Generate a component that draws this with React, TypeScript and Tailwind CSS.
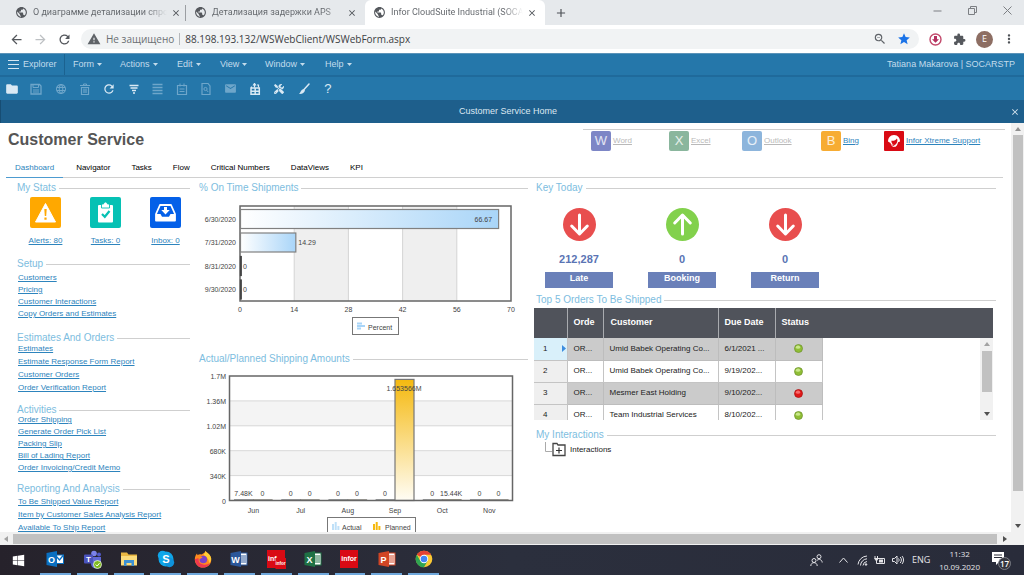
import React from "react";
import {
  MdPublic,
  MdClose,
  MdAdd,
  MdArrowBack,
  MdArrowForward,
  MdRefresh,
  MdWarning,
  MdZoomOut,
  MdStar,
  MdExtension,
  MdMoreVert,
  MdFolder,
  MdLanguage,
  MdEmail,
} from "react-icons/md";
import { FaTools, FaWindows } from "react-icons/fa";

/* ---------- browser chrome ---------- */

function BrowserTab({ title, active = false, divider = false }: { title: string; active?: boolean; divider?: boolean }) {
  return (
    <div
      className={
        active
          ? "flex h-full w-[180px] items-center rounded-t-md bg-white pl-2 pr-2"
          : "flex h-full w-[179px] items-center pl-2 pr-2"
      }
    >
      <MdPublic className="size-[13px] shrink-0 text-[#55585d]" />
      <span className="ml-[5px] min-w-0 flex-1 overflow-hidden whitespace-nowrap bg-gradient-to-r from-[#5f6368] from-85% to-transparent bg-clip-text text-transparent">
        {title}
      </span>
      <button aria-label="Закрыть вкладку" className="ml-1 text-[#4d5156]">
        <MdClose className="size-[10px]" />
      </button>
      {divider && <span className="-mr-2 ml-1 h-4 w-px bg-[#9b9ea2]" />}
    </div>
  );
}

function BrowserChrome() {
  return (
    <header className="shrink-0 font-['Open_Sans','Noto_Sans',sans-serif] text-[9px]">
      <div className="flex h-[25px] items-center bg-[#e6e9ec] pl-[7px] font-[Roboto,'Noto_Sans',sans-serif]">
        <BrowserTab title="О диаграмме детализации спро" divider />
        <BrowserTab title="Детализация задержки APS" />
        <BrowserTab title="Infor CloudSuite Industrial (SOCA" active />
        <button aria-label="Новая вкладка" className="ml-[9px] text-[#4d5156]">
          <MdAdd className="size-[14px]" />
        </button>
        <div className="ml-auto flex h-full items-center gap-[26px] pr-3 pb-1 text-[#7c7f83]">
          <button aria-label="Свернуть">
            <svg className="size-[9px]" viewBox="0 0 9 9" stroke="currentColor"><path d="M0.5 5H8.5" /></svg>
          </button>
          <button aria-label="Восстановить">
            <svg className="size-[9px]" viewBox="0 0 9 9" fill="none" stroke="currentColor">
              <path d="M0.5 2.5H6.5V8.5H0.5ZM2.5 2.5V0.5H8.5V6.5H6.5" />
            </svg>
          </button>
          <button aria-label="Закрыть">
            <svg className="size-[9px]" viewBox="0 0 9 9" stroke="currentColor"><path d="M0.5 0.5L8.5 8.5M8.5 0.5L0.5 8.5" /></svg>
          </button>
        </div>
      </div>
      <div className="flex h-7 items-center bg-white pl-[9px] pr-2">
        <button aria-label="Назад" className="text-[#55585d]"><MdArrowBack className="size-[15px]" /></button>
        <button aria-label="Вперёд" className="ml-[9px] text-[#bdc0c3]"><MdArrowForward className="size-[15px]" /></button>
        <button aria-label="Обновить" className="ml-[9px] text-[#55585d]"><MdRefresh className="size-[15px]" /></button>
        <div className="ml-[9px] flex h-5 flex-1 items-center rounded-full bg-[#f1f3f4] pl-[6px] pr-2">
          <MdWarning className="size-[14px] text-[#5f6368]" />
          <span className="ml-[5px] text-[10px] text-[#6b6f73]">Не защищено</span>
          <span className="mx-[5px] h-3 w-px bg-[#b4b7ba]" />
          <input
            aria-label="Адрес"
            defaultValue="88.198.193.132/WSWebClient/WSWebForm.aspx"
            className="min-w-0 flex-1 bg-transparent text-[10px] text-[#3c4043] outline-none"
          />
          <MdZoomOut className="size-[14px] text-[#5f6368]" />
          <MdStar className="ml-[10px] size-[14px] text-[#1a73e8]" />
        </div>
        <svg className="ml-[10px] size-[13px]" viewBox="0 0 13 13">
          <circle cx="6.5" cy="6.5" r="5.5" fill="#fff" stroke="#c2496b" strokeWidth="1.4" />
          <path d="M5 3h3v3.2h2L6.5 9.8 3 6.2h2z" fill="#b3305f" />
        </svg>
        <MdExtension className="ml-[11px] size-[13px] text-[#55585d]" />
        <span className="ml-[10px] flex size-[17px] items-center justify-center rounded-full bg-[#8d6e63] text-[9px] text-white">E</span>
        <MdMoreVert className="ml-[9px] size-[14px] text-[#4d5156]" />
      </div>
    </header>
  );
}

/* ---------- application bars ---------- */

const menus = [
  { label: "Form", width: "w-[47px]" },
  { label: "Actions", width: "w-[57px]" },
  { label: "Edit", width: "w-[43px]" },
  { label: "View", width: "w-[45px]" },
  { label: "Window", width: "w-[60px]" },
  { label: "Help", width: "w-[40px]" },
];

function SaveGlyph() {
  return (
    <svg className="size-3" viewBox="0 0 12 12" fill="none" stroke="currentColor">
      <path d="M1 1.5h8.5L11 3v8H1z" strokeWidth="1.3" />
      <path d="M3 1.5v3h5.5v-3M3 7h6M3 9h6" />
    </svg>
  );
}

function TrashGlyph() {
  return (
    <svg className="size-3" viewBox="0 0 12 12" fill="none" stroke="currentColor">
      <path d="M1 2.5h10M4.5 2.3V1h3v1.3" />
      <path d="M2.500 4.500v7h7v-7zM5 5.500v4.500M7 5.500v4.500" strokeWidth="1.2" />
    </svg>
  );
}

function FilterGlyph() {
  return (
    <svg className="size-3" viewBox="0 0 12 12" fill="none" stroke="currentColor" strokeWidth="1.4">
      <path d="M1.500 2.500h9M2.500 5h7M4 7.500h4M5 10h2" />
    </svg>
  );
}

function RowsGlyph() {
  return (
    <svg className="h-3 w-[11px]" viewBox="0 0 11 12" fill="none" stroke="currentColor" strokeWidth="1.6">
      <path d="M0.500 1.500h10M0.500 4.500h10M0.500 7.500h10M0.500 10.500h10" />
    </svg>
  );
}

function NoteGlyph() {
  return (
    <svg className="size-3" viewBox="0 0 12 12" fill="none" stroke="currentColor">
      <path d="M1.500 2.500h9v9h-9z" strokeWidth="1.2" />
      <path d="M4 0.500v3M8 0.500v3M3.500 6h5M3.500 8.500h5" />
    </svg>
  );
}

function SearchDocGlyph() {
  return (
    <svg className="size-3" viewBox="0 0 12 12" fill="none" stroke="currentColor">
      <path d="M2 0.500h6L10 3v8.500H2z" strokeWidth="1.200" />
      <circle cx="5.500" cy="6" r="1.600" />
      <path d="M6.700 7.200L8.200 9" />
    </svg>
  );
}

function ExportGlyph() {
  return (
    <svg className="size-3" viewBox="0 0 12 12" fill="none" stroke="currentColor">
      <path d="M2.500 5V3.500M5.500 0.500v4M4 2.500l1.500-2 1.500 2M8 2h1.500v2.500" strokeWidth="1.200" />
      <path d="M2 5h8.300v6.300H2zM2 8.200h8.300M6.200 5v6" strokeWidth="1.500" />
    </svg>
  );
}

function BrushGlyph() {
  return (
    <svg className="size-3" viewBox="0 0 12 12" fill="none" stroke="currentColor">
      <path d="M11 1L6 6.500" strokeWidth="1.500" strokeLinecap="round" />
      <path d="M5.500 6l1.500 1.500C6.500 9.500 4 11.500 1 11 2.500 10 2.500 7 5.500 6z" fill="currentColor" stroke="none" />
    </svg>
  );
}

const tools = [
  { label: "Open", icon: <MdFolder className="size-[14px]" />, on: true },
  { label: "Save", icon: <SaveGlyph />, on: false },
  { label: "Globe", icon: <MdLanguage className="size-3" />, on: false },
  { label: "Delete", icon: <TrashGlyph />, on: false },
  { label: "Refresh", icon: <MdRefresh className="size-[14px]" />, on: true },
  { label: "Filter", icon: <FilterGlyph />, on: true },
  { label: "Rows", icon: <RowsGlyph />, on: false },
  { label: "Notes", icon: <NoteGlyph />, on: false },
  { label: "Find document", icon: <SearchDocGlyph />, on: false },
  { label: "Mail", icon: <MdEmail className="size-[13px]" />, on: false },
  { label: "Export", icon: <ExportGlyph />, on: true },
  { label: "Design", icon: <FaTools className="size-[10px]" />, on: true },
  { label: "Theme", icon: <BrushGlyph />, on: true },
  { label: "Help", icon: <span className="text-[13px] leading-none">?</span>, on: true },
];

function AppBars() {
  return (
    <div className="shrink-0 text-[9px] text-[#c3dcec]">
      <nav className="flex h-6 items-center border-t border-b-2 border-t-[#5b93b8] border-b-[#1f6a9b] bg-[#2577aa]">
        <button className="flex h-full w-[65px] items-center gap-[4px] border-r border-[#1b6290] pl-[8px]">
          <svg className="h-[9px] w-[11px]" viewBox="0 0 11 9" stroke="#d5e6f1"><path d="M0 0.500H11M0 4.500H11M0 8.500H11" /></svg>
          Explorer
        </button>
        <div className="flex pl-2">
          {menus.map((m) => (
            <button key={m.label} className={"flex items-center gap-[3px] " + m.width}>
              {m.label}
              <svg className="h-[3px] w-[5px]" viewBox="0 0 5 3" fill="currentColor"><path d="M0 0h5L2.500 3z" /></svg>
            </button>
          ))}
        </div>
        <span className="ml-auto pr-[9px]">Tatiana Makarova | SOCARSTP</span>
      </nav>
      <div className="flex h-[23px] items-center bg-[#2577aa]">
        <div className="grid w-[340px] grid-cols-14">
          {tools.map((t) => (
            <button
              key={t.label}
              aria-label={t.label}
              className={
                t.on
                  ? "flex items-center justify-center text-[#d9e9f4]"
                  : "flex items-center justify-center text-[#6ea6ca]"
              }
            >
              {t.icon}
            </button>
          ))}
        </div>
      </div>
      <div className="flex h-[23px] items-center border-l border-[#174d73] bg-[#1e5f8c] text-[#dce8f1]">
        <span className="flex-1 pl-[5px] text-center">Customer Service Home</span>
        <button aria-label="Close form" className="pr-1"><MdClose className="size-[10px]" /></button>
      </div>
    </div>
  );
}

/* ---------- shared pieces ---------- */

function SectionTitle({ children }: { children: React.ReactNode }) {
  return (
    <h2 className="flex h-2 items-center gap-[3px] whitespace-nowrap text-[10px] leading-[8px] text-[#7dbde0]">
      {children}
      <span className="h-px flex-1 bg-[#cfcfcf]" />
    </h2>
  );
}

function Link({ children }: { children: React.ReactNode }) {
  return <a href="#" className="whitespace-nowrap text-[#2d84bd] underline">{children}</a>;
}

function LinkList({ items, tall = false }: { items: string[]; tall?: boolean }) {
  return (
    <ul className={tall ? "pl-px leading-[13px]" : "pl-px leading-[12px]"}>
      {items.map((i) => (
        <li key={i}><Link>{i}</Link></li>
      ))}
    </ul>
  );
}

/* ---------- left column ---------- */

const stats = [
  {
    label: "Alerts: 80",
    tile: "flex size-[31px] items-center justify-center rounded-xs bg-[#ffa800]",
    icon: (
      <svg className="size-[23px]" viewBox="0 0 23 23">
        <path d="M11.500 2.500L21.500 21H1.500z" fill="#fff" stroke="#fff" strokeLinejoin="round" />
        <path d="M10.300 8h2.400l-.5 7h-1.400zM10.400 16.500h2.200v2.200h-2.200z" fill="#ffa800" />
      </svg>
    ),
  },
  {
    label: "Tasks: 0",
    tile: "flex size-[31px] items-center justify-center rounded-xs bg-[#06c1b4]",
    icon: (
      <svg className="size-[23px]" viewBox="0 0 23 23">
        <path d="M5 4h13a1 1 0 0 1 1 1v15.500a1 1 0 0 1-1 1H5a1 1 0 0 1-1-1V5a1 1 0 0 1 1-1z" fill="#fff" />
        <path d="M7.500 3h2a2 2 0 0 1 4 0h2v4h-8z" fill="#fff" stroke="#06c1b4" strokeWidth="0.900" />
        <path d="M8 13l2.800 2.800L15.500 10" fill="none" stroke="#06c1b4" strokeWidth="2.200" />
      </svg>
    ),
  },
  {
    label: "Inbox: 0",
    tile: "flex size-[31px] items-center justify-center rounded-xs bg-[#0460e8]",
    icon: (
      <svg className="size-[23px]" viewBox="0 0 23 23">
        <path d="M6 4h11l4 9v6.500H2V13z" fill="none" stroke="#fff" strokeWidth="1.800" strokeLinejoin="round" />
        <path d="M2 13h4.500l1.500 2.700h7l1.500-2.700H21v6.500H2z" fill="#fff" />
        <path d="M10 6h3v3h2.700l-4.200 4.500L7.300 9H10z" fill="#fff" />
      </svg>
    ),
  },
];

function LeftColumn() {
  return (
    <section className="min-w-0">
      <SectionTitle>My Stats</SectionTitle>
      <div className="mt-[5px] flex gap-[9px] pl-[3px]">
        {stats.map((s) => (
          <div key={s.label} className="flex w-[51px] shrink-0 flex-col items-center gap-2 leading-[10px]">
            <span className={s.tile}>{s.icon}</span>
            <Link>{s.label}</Link>
          </div>
        ))}
      </div>
      <div className="mt-[14px] flex flex-col gap-1">
        <SectionTitle>Setup</SectionTitle>
        <LinkList items={["Customers", "Pricing", "Customer Interactions", "Copy Orders and Estimates"]} />
      </div>
      <div className="mt-[14px]">
        <SectionTitle>Estimates And Orders</SectionTitle>
        <LinkList tall items={["Estimates", "Estimate Response Form Report", "Customer Orders", "Order Verification Report"]} />
      </div>
      <div className="mt-3">
        <SectionTitle>Activities</SectionTitle>
        <LinkList items={["Order Shipping", "Generate Order Pick List", "Packing Slip", "Bill of Lading Report", "Order Invoicing/Credit Memo"]} />
      </div>
      <div className="mt-[11px] flex flex-col gap-[2px]">
        <SectionTitle>Reporting And Analysis</SectionTitle>
        <LinkList tall items={["To Be Shipped Value Report", "Item by Customer Sales Analysis Report", "Available To Ship Report"]} />
      </div>
    </section>
  );
}

/* ---------- charts ---------- */

const shipments = [
  { date: "6/30/2020", value: 66.67 },
  { date: "7/31/2020", value: 14.29 },
  { date: "8/31/2020", value: 0 },
  { date: "9/30/2020", value: 0 },
];

function ShipmentsChart() {
  const x0 = 42;
  const w = 271;
  const step = w / 5;
  return (
    <svg className="block w-full text-[7px]" viewBox="0 0 330 149" fill="#444" role="img" aria-label="% On Time Shipments">
      <defs>
        <linearGradient id="blueBar"><stop offset="0" stopColor="#fff" /><stop offset="1" stopColor="#a9d5f8" /></linearGradient>
      </defs>
      <rect x={x0} y="10" width={w} height="95" fill="#fff" />
      {[1, 3].map((i) => (
        <rect key={i} x={x0 + i * step} y="10" width={step} height="95" fill="#efefef" />
      ))}
      {[1, 2, 3, 4].map((i) => (
        <path key={i} d={`M${x0 + i * step} 10V105`} stroke="#d4d4d4" />
      ))}
      <rect x={x0} y="10" width={w} height="95" fill="none" stroke="#666" strokeWidth="1.500" />
      {shipments.map((s, i) => {
        const y = 13.5 + i * 23.5;
        const bar = (s.value / 70) * w;
        return (
          <g key={s.date}>
            <rect x={x0 + 0.5} y={y} width={Math.max(bar, 0.8)} height="19" fill="url(#blueBar)" stroke={s.value ? "#808080" : "#444"} strokeWidth="1.200" />
            <text x="38" y={y + 12} textAnchor="end">{s.date}</text>
            {s.value > 50 ? (
              <text x={x0 + bar - 6} y={y + 12} textAnchor="end">{s.value}</text>
            ) : (
              <text x={x0 + bar + 3} y={y + 12}>{s.value}</text>
            )}
          </g>
        );
      })}
      {[0, 14, 28, 42, 56, 70].map((t, i) => (
        <text key={t} x={x0 + i * step} y="116" textAnchor="middle">{t}</text>
      ))}
      <rect x="154.500" y="121.500" width="46" height="17" fill="#fff" stroke="#777" />
      <path d="M159 127.500h5M159 130h8M159 132.500h4" stroke="#a9d5f8" strokeWidth="1.800" />
      <text x="170" y="134">Percent</text>
    </svg>
  );
}

const months = [
  { name: "Jun", actual: 7480, planned: 0, a: "7.48K", p: "0" },
  { name: "Jul", actual: 0, planned: 0, a: "0", p: "0" },
  { name: "Aug", actual: 0, planned: 0, a: "0", p: "0" },
  { name: "Sep", actual: 0, planned: 1653566, a: "0", p: "1.653566M" },
  { name: "Oct", actual: 0, planned: 15440, a: "0", p: "15.44K" },
  { name: "Nov", actual: 0, planned: 0, a: "0", p: "0" },
];

function AmountsChart() {
  const x0 = 31.5;
  const w = 283;
  const y0 = 9;
  const h = 124.5;
  const base = y0 + h;
  const group = w / 6;
  const scale = (v: number) => Math.max((v / 1700000) * h, 0.8);
  return (
    <svg className="block w-full text-[7px]" viewBox="0 0 330 175" fill="#444" role="img" aria-label="Actual/Planned Shipping Amounts">
      <defs>
        <linearGradient id="goldBar" x1="0" y1="0" x2="0" y2="1"><stop offset="0" stopColor="#f5b90f" /><stop offset="1" stopColor="#fffdf5" /></linearGradient>
      </defs>
      <rect x={x0} y={y0} width={w} height={h} fill="#fff" />
      {[1, 3].map((i) => (
        <rect key={i} x={x0} y={y0 + (i * h) / 5} width={w} height={h / 5} fill="#f4f4f4" />
      ))}
      {[1, 2, 3, 4].map((i) => (
        <path key={i} d={`M${x0} ${y0 + (i * h) / 5}H${x0 + w}`} stroke="#d8d8d8" />
      ))}
      {months.map((m, i) => {
        const gx = x0 + i * group + 5;
        const big = m.planned > 1000000;
        return (
          <g key={m.name}>
            <rect x={gx} y={base - scale(m.actual)} width="19" height={scale(m.actual)} fill="#bfe0f8" stroke="#777" strokeWidth="0.800" />
            <rect x={gx + 19} y={base - scale(m.planned)} width="19" height={scale(m.planned)} fill={big ? "url(#goldBar)" : "#a89a6c"} stroke="#777" strokeWidth={big ? 1.2 : 0.6} />
            <text x={gx + 9} y={base - 5} textAnchor="middle">{m.a}</text>
            <text x={gx + 28} y={big ? y0 + 15 : base - 5} textAnchor="middle">{m.p}</text>
            <text x={gx + 19} y={base + 12} textAnchor="middle">{m.name}</text>
          </g>
        );
      })}
      <rect x={x0} y={y0} width={w} height={h} fill="none" stroke="#666" strokeWidth="1.500" />
      {["1.7M", "1.36M", "1.02M", "680K", "340K", "0"].map((t, i) => (
        <text key={t} x="28" y={y0 + (i * h) / 5 + 3} textAnchor="end">{t}</text>
      ))}
      <rect x="129.500" y="150.500" width="88" height="20" fill="#fff" stroke="#777" />
      <path d="M135 163v-6M137.700 163v-8M140.400 163v-4" stroke="#bfe0f8" strokeWidth="2" />
      <text x="144" y="163">Actual</text>
      <path d="M176 163v-6M178.700 163v-8M181.400 163v-4" stroke="#f5b90f" strokeWidth="2" />
      <text x="187" y="163">Planned</text>
    </svg>
  );
}

/* ---------- right column ---------- */

function ArrowBadge({ up = false }: { up?: boolean }) {
  return (
    <svg className="size-[33px]" viewBox="0 0 33 33" fill="none">
      <circle cx="16.500" cy="16.500" r="16.500" fill={up ? "#82d14c" : "#e84e4e"} />
      <path
        d={up ? "M16.500 26V8M8.700 15l7.800-8 7.800 8" : "M16.500 7V25M8.700 18l7.800 8 7.800-8"}
        stroke="#fff"
        strokeWidth="3"
        strokeLinecap="round"
        strokeLinejoin="round"
      />
    </svg>
  );
}

const keys = [
  { label: "Late", value: "212,287", up: false },
  { label: "Booking", value: "0", up: true },
  { label: "Return", value: "0", up: false },
];

const orders = [
  { customer: "Umid Babek Operating Co...", due: "6/1/2021 ...", ok: true },
  { customer: "Umid Babek Operating Co...", due: "9/19/202...", ok: true },
  { customer: "Mesmer East Holding", due: "9/10/202...", ok: false },
  { customer: "Team Industrial Services", due: "8/10/202...", ok: true },
];

function OrdersTable() {
  return (
    <div className="relative -ml-0.5 mr-[3px] mt-1 h-28 overflow-hidden">
      <table className="w-full table-fixed border-collapse text-left">
        <colgroup>
          <col className="w-[33px]" />
          <col className="w-9" />
          <col className="w-[115px]" />
          <col className="w-[57px]" />
          <col className="w-[47px]" />
          <col />
        </colgroup>
        <thead>
          <tr className="h-[30px] bg-[#50535b] text-[9px] text-white">
            <th className="border-r border-[#a9abaf]" />
            <th className="border-r border-[#a9abaf] pl-[6px]">Orde</th>
            <th className="border-r border-[#a9abaf] pl-[7px]">Customer</th>
            <th className="border-r border-[#a9abaf] pl-[6px]">Due Date</th>
            <th className="pl-[6px]">Status</th>
            <th />
          </tr>
        </thead>
        <tbody className="whitespace-nowrap text-[#222]">
          {orders.map((o, i) => (
            <tr key={i} className="h-[22px]">
              <td className={i === 0 ? "border-b border-r border-[#c4c4c4] bg-[#d9f0fa]" : "border-b border-r border-[#c4c4c4] bg-[#efefef]"}>
                <span className="flex items-center justify-between pl-[9px] pr-[1px]">
                  {i + 1}
                  {i === 0 && <svg className="h-[7px] w-1" viewBox="0 0 4 7" fill="#3b8de0"><path d="M0 0l4 3.500L0 7z" /></svg>}
                </span>
              </td>
              {["OR...", o.customer, o.due].map((t, j) => (
                <td key={j} className={i % 2 ? "border-b border-r border-[#c4c4c4] bg-white pl-[6px]" : "border-b border-r border-[#bdbdbd] bg-[#cbcbcb] pl-[6px]"}>
                  {t}
                </td>
              ))}
              <td className={i % 2 ? "border-b border-r border-[#c4c4c4] bg-white" : "border-b border-r border-[#bdbdbd] bg-[#cbcbcb]"}>
                <svg className="mx-auto size-[9px]" viewBox="0 0 9 9" role="img" aria-label={o.ok ? "OK" : "Late"}>
                  <circle cx="4.500" cy="4.500" r="4" fill={o.ok ? "#8fbe35" : "#e01818"} stroke={o.ok ? "#6b8f2b" : "#a81010"} strokeWidth="0.700" />
                  <ellipse cx="4" cy="3.200" rx="2.200" ry="1.600" fill={o.ok ? "#c9e88a" : "#f86a6a"} />
                </svg>
              </td>
              <td />
            </tr>
          ))}
        </tbody>
      </table>
      <div className="absolute bottom-0 right-0 top-[30px] flex w-[13px] flex-col items-center bg-[#f1f1f1] py-1">
        <svg className="h-1 w-[6px]" viewBox="0 0 6 4" fill="#a3a3a3"><path d="M0 4h6L3 0z" /></svg>
        <span className="mt-[5px] h-[41px] w-[10px] bg-[#c1c1c1]" />
        <svg className="mt-auto h-1 w-[6px]" viewBox="0 0 6 4" fill="#505050"><path d="M0 0h6L3 4z" /></svg>
      </div>
    </div>
  );
}

function RightColumn() {
  return (
    <section className="min-w-0">
      <SectionTitle>Key Today</SectionTitle>
      <div className="mt-4 flex gap-[35px] pl-[9px]">
        {keys.map((k) => (
          <div key={k.label} className="flex w-[68px] flex-col items-center font-bold">
            <ArrowBadge up={k.up} />
            <span className="mt-[11px] text-[11px] leading-[14px] text-[#5a74b4]">{k.value}</span>
            <button className="mt-[6px] h-4 w-full bg-[#6a80b9] pb-1 text-[9px] leading-[12px] text-white">{k.label}</button>
          </div>
        ))}
      </div>
      <div className="mt-2">
        <SectionTitle>Top 5 Orders To Be Shipped</SectionTitle>
        <OrdersTable />
      </div>
      <div className="mt-[11px]">
        <SectionTitle>My Interactions</SectionTitle>
        <div className="mt-[3px] flex items-center pl-[9px] text-[#222]">
          <svg className="h-[15px] w-[22px]" viewBox="0 0 22 15" fill="none">
            <path d="M0.500 0V9.500H7" stroke="#aaa" />
            <path d="M8 13.500V1.500h4l1 1.500h7v10.500z" stroke="#444" strokeWidth="1.300" />
            <path d="M11 8.500h6M14 5.500v6" stroke="#333" strokeWidth="1.200" />
          </svg>
          <span className="ml-[3px]">Interactions</span>
        </div>
      </div>
    </section>
  );
}

/* ---------- page header ---------- */

const apps = [
  { label: "Word", letter: "W", tile: "bg-[#7d86c6]", enabled: false },
  { label: "Excel", letter: "X", tile: "bg-[#8ab69d]", enabled: false },
  { label: "Outlook", letter: "O", tile: "bg-[#8db5dc]", enabled: false },
  { label: "Bing", letter: "B", tile: "bg-[#f7ac33]", enabled: true },
];

function PageHeader() {
  return (
    <div className="flex h-[34px] items-start justify-between pl-2 pr-[6px] pt-[6px]">
      <h1 className="mt-px text-[16px] font-bold leading-[20px] text-[#555]">Customer Service</h1>
      <div className="grid w-[422px] grid-cols-[78fr_73fr_79fr_63fr_121fr] border-t border-[#cfcfcf] pl-2 pt-px">
        {apps.map((a) => (
          <a
            key={a.label}
            href="#"
            className={a.enabled ? "flex items-center gap-[2px] text-[#2d84bd]" : "flex items-center gap-[2px] text-[#b9b9b9]"}
          >
            <span className={"inline-flex size-5 items-center justify-center rounded-xs text-[13px] text-white/80 " + a.tile}>{a.letter}</span>
            <span className="underline">{a.label}</span>
          </a>
        ))}
        <a href="#" className="flex items-center gap-[2px] whitespace-nowrap text-[#2d84bd]">
          <svg className="size-5 shrink-0" viewBox="0 0 20 20">
            <rect width="20" height="20" rx="1" fill="#d90a14" />
            <path d="M10 4c4 0 6 3 6 6.500l-2 .8C13.500 14.500 12 16 10.300 16S7 14.500 6.500 12L4 10.500C4 7 6 4 10 4z" fill="#fff" />
            <path d="M7.300 9.800c2.700.3 4.500-.6 5.600-2.300.6 1 .6 2 .3 3.300-.5 2-1.600 3.200-2.900 3.200-1.500 0-2.800-1.700-3-4.200z" fill="#d90a14" />
            <path d="M7.500 13.700l3 1.200" stroke="#d90a14" strokeWidth="0.800" />
          </svg>
          <span className="underline">Infor Xtreme Support</span>
        </a>
      </div>
    </div>
  );
}

const pageTabs = ["Dashboard", "Navigator", "Tasks", "Flow", "Critical Numbers", "DataViews", "KPI"];

function PageTabs() {
  return (
    <div role="tablist" className="ml-[6px] mr-2 flex h-[21px] items-center gap-[21px] border-b border-[#d0d0d0]">
      {pageTabs.map((t, i) => (
        <button
          key={t}
          role="tab"
          aria-selected={i === 0}
          className={
            i === 0
              ? "-mr-2 h-[21px] border-b border-[#4d9bd0] px-[9px] pt-[3px] text-[#2d84bd]"
              : "h-[21px] pt-[2px] text-black"
          }
        >
          {t}
        </button>
      ))}
    </div>
  );
}

/* ---------- taskbar ---------- */

function OfficeIcon({ letter, front, back }: { letter: string; front: string; back: string }) {
  return (
    <svg className="size-[18px]" viewBox="0 0 18 18">
      <rect x="8" y="3" width="9" height="12" fill="#fff" stroke={back} />
      <path d="M11 6h5M11 8h5M11 10h5M11 12h5" stroke={back} />
      <path d="M0.500 3L11 1v16L0.500 15z" fill={front} />
      <text x="5.600" y="12.500" textAnchor="middle" fontSize="9" fontWeight="700" fill="#fff">{letter}</text>
    </svg>
  );
}

function InforIcon({ twin = false }: { twin?: boolean }) {
  return (
    <svg className="size-[19px]" viewBox="0 0 19 19">
      <rect width="18" height="18" fill="#d90a14" />
      <text x={twin ? 1 : 9} y="11" textAnchor={twin ? "start" : "middle"} fontSize="7" fontWeight="700" fill="#fff">{twin ? "inf" : "infor"}</text>
      {twin && (
        <g>
          <rect x="8.500" y="8" width="10.500" height="11" fill="#d90a14" />
          <text x="13.500" y="15" textAnchor="middle" fontSize="4.500" fontWeight="700" fill="#fff">infor</text>
        </g>
      )}
    </svg>
  );
}

const taskApps = [
  {
    name: "Outlook",
    icon: (
      <svg className="size-[18px]" viewBox="0 0 18 18">
        <rect x="9" y="5" width="8.500" height="8.500" fill="#fff" stroke="#0a6fc0" />
        <path d="M10 6l3.500 4L17.500 5" fill="none" stroke="#0a6fc0" strokeWidth="1.300" />
        <path d="M0.500 3L11 1v16L0.500 15z" fill="#0a6fc0" />
        <text x="5.600" y="12.500" textAnchor="middle" fontSize="9" fontWeight="700" fill="#fff">O</text>
      </svg>
    ),
  },
  {
    name: "Teams",
    icon: (
      <svg className="size-[19px]" viewBox="0 0 19 19">
        <circle cx="11" cy="3.500" r="2.800" fill="#7b83eb" />
        <circle cx="16" cy="4.500" r="2" fill="#5059c9" />
        <path d="M8 7h10v6a4 4 0 0 1-10 1z" fill="#5f68d4" />
        <rect x="1" y="4.500" width="9" height="9" rx="1" fill="#4b53bc" />
        <text x="5.500" y="12" textAnchor="middle" fontSize="8" fontWeight="700" fill="#fff">T</text>
        <circle cx="14.500" cy="14.500" r="4" fill="#7fba1f" stroke="#fff" strokeWidth="0.700" />
        <path d="M12.700 14.500l1.500 1.500 2.300-2.800" fill="none" stroke="#fff" />
      </svg>
    ),
  },
  {
    name: "Explorer",
    icon: (
      <svg className="size-[18px]" viewBox="0 0 18 18">
        <path d="M1 2.500h6l1.500 2H17V15H1z" fill="#e9b743" />
        <path d="M1 6h16v9.500H1z" fill="#fbdc7d" />
        <path d="M4 16V10h10v6h-2.500v-3h-5v3z" fill="#3d91d4" />
      </svg>
    ),
  },
  {
    name: "Skype",
    icon: (
      <svg className="size-[18px]" viewBox="0 0 18 18">
        <circle cx="9" cy="9" r="7.500" fill="#0fa6ea" />
        <circle cx="5.500" cy="5.500" r="4.700" fill="#0fa6ea" />
        <circle cx="12.500" cy="12.500" r="4.700" fill="#0f93dc" />
        <text x="9" y="13" textAnchor="middle" fontSize="11" fontWeight="700" fill="#fff">S</text>
      </svg>
    ),
  },
  {
    name: "Firefox",
    icon: (
      <svg className="size-[18px]" viewBox="0 0 18 18">
        <path d="M11.500 0.800c.8 2 4.500 3 5.600 7.200 1 5.500-3 9.500-8 9.500S.8 13.800.8 9.200C.8 6.800 2 4.500 3 3.500l.6 1.700C4.500 4.300 6 4 7.500 4.500 9 3.500 11.300 3 11.500.8z" fill="#ff8a1f" />
        <path d="M11.500 0.800c.8 2 4.500 3 5.600 7.200.2 2-.6 4-2 5C15 9 12.500 7 9.500 4.500c1-.9 1.900-1.800 2-3.700z" fill="#ffce36" />
        <path d="M.8 9.200C1.500 14 4 17.500 9 17.500c3.500 0 6-2 7.200-4.500-2 1.500-5 2-7 1.500-4-.8-5-3.500-4.500-6.500z" fill="#f0384f" />
        <circle cx="9.300" cy="9.500" r="3.800" fill="#7a42c9" />
        <path d="M4 6c2 0 3 .8 4.500 1-.3 1.300-2 1.500-3 2.500C4.500 8.800 4 7.500 4 6z" fill="#ff8a1f" />
      </svg>
    ),
  },
  { name: "Word", icon: <OfficeIcon letter="W" front="#2b579a" back="#2b579a" /> },
  { name: "Infor client", icon: <InforIcon twin /> },
  { name: "Excel", icon: <OfficeIcon letter="X" front="#1f7145" back="#1f7145" /> },
  { name: "Infor", icon: <InforIcon /> },
  { name: "PowerPoint", icon: <OfficeIcon letter="P" front="#d04525" back="#d04525" /> },
  {
    name: "Chrome",
    icon: (
      <svg className="size-[18px]" viewBox="0 0 18 18">
        <circle cx="9" cy="9" r="8.300" fill="#fbc934" />
        <path d="M9 9L1.800 4.850A8.300 8.300 0 0 1 16.200 4.850H9z" fill="#e34133" />
        <path d="M1.800 4.850A8.300 8.300 0 0 0 9 17.300L12.600 11.100 5.400 11.100z" fill="#30a552" />
        <circle cx="9" cy="9" r="4.200" fill="#fff" />
        <circle cx="9" cy="9" r="3.300" fill="#4285f4" />
      </svg>
    ),
  },
];

function Taskbar() {
  return (
    <footer className="flex h-[30px] shrink-0 items-center bg-gradient-to-r from-[#26222b] via-[#2b2f3d] to-[#292c3a] font-['Open_Sans','Noto_Sans',sans-serif] text-white">
      <button aria-label="Start" className="flex w-[37px] justify-center"><FaWindows className="size-[13px]" /></button>
      <div className="grid h-full w-[405px] grid-cols-11">
        {taskApps.map((a) => (
          <button key={a.name} aria-label={a.name} className="mx-[3px] flex items-center justify-center border-b-2 border-[#6fa8dc] font-['Liberation_Sans',sans-serif]">
            {a.icon}
          </button>
        ))}
      </div>
      <div className="ml-auto flex items-center pr-[13px] text-[#e4e4e8]">
        <svg className="size-[13px]" viewBox="0 0 13 13" fill="none" stroke="currentColor">
          <circle cx="4" cy="6.500" r="2" /><path d="M0.800 12c0-4.500 6.400-4.500 6.400 0" />
          <circle cx="9" cy="2.700" r="2" /><path d="M7 6.500c2-2 5-1 5.200 2" />
        </svg>
        <svg className="ml-4 h-[6px] w-[9px]" viewBox="0 0 9 6" fill="none" stroke="currentColor"><path d="M0.500 5.500l4-4.500 4 4.500" /></svg>
        <svg className="ml-[9px] size-[11px]" viewBox="0 0 11 11" fill="none" stroke="currentColor">
          <path d="M1 9.500A9.500 9.500 0 0 1 10 1M3.500 10.500A7 7 0 0 1 10 3.800M6 10.500A4.500 4.500 0 0 1 10 6.500" />
          <circle cx="9" cy="9.500" r="0.800" fill="currentColor" />
        </svg>
        <svg className="ml-[6px] h-[9px] w-3" viewBox="0 0 12 9" fill="none" stroke="currentColor">
          <path d="M4 2.500h6.500v5H2.500V5" /><path d="M5 5h4" strokeWidth="3" /><path d="M1 0v2M3.500 0v2M0.500 2.500h3.500L2.500 5z" fill="currentColor" />
        </svg>
        <svg className="ml-[6px] h-[10px] w-3" viewBox="0 0 12 10" fill="none" stroke="currentColor">
          <path d="M0.500 3.500h2L5 1v8L2.500 6.500h-2zM6.500 3.500c.8 1 .8 2 0 3M8.200 2c1.600 2 1.600 4 0 6M10 1c2 2.500 2 5.500 0 8" />
        </svg>
        <span className="ml-2 text-[9px]">ENG</span>
        <div className="ml-[9px] text-center text-[8px] leading-[13px]">
          <div>11:32</div>
          <div>10.09.2020</div>
        </div>
        <svg className="ml-3 h-[19px] w-[19px] font-['Open_Sans',sans-serif]" viewBox="0 0 19 19">
          <path d="M0 1h12v10H7l-3 3v-3H0z" fill="#fff" />
          <path d="M2 4h8M2 6.500h8" stroke="#2a2c38" />
          <circle cx="12.500" cy="12.500" r="6" fill="#34363f" stroke="#8b8d96" strokeWidth="0.800" />
          <text x="12.500" y="15.500" textAnchor="middle" fontSize="8" fontWeight="600" fill="#fff">17</text>
        </svg>
      </div>
    </footer>
  );
}

/* ---------- page ---------- */

export default function App() {
  return (
    <div className="flex h-screen flex-col overflow-hidden bg-white font-['Liberation_Sans',Arial,sans-serif] text-[8px]">
      <BrowserChrome />
      <AppBars />
      <div className="flex min-h-0 flex-1">
        <main className="min-w-0 flex-1 overflow-hidden">
          <PageHeader />
          <PageTabs />
          <div className="grid grid-cols-[173fr_330fr_460fr] gap-2 pl-[17px] pr-[15px] pt-[6px]">
            <LeftColumn />
            <section className="min-w-0">
              <div className="pl-px"><SectionTitle>% On Time Shipments</SectionTitle></div>
              <div className="pb-[10px] pt-1"><ShipmentsChart /></div>
              <div className="pl-px"><SectionTitle>Actual/Planned Shipping Amounts</SectionTitle></div>
              <div className="pt-1"><AmountsChart /></div>
            </section>
            <RightColumn />
          </div>
        </main>
        <div className="flex w-[13px] flex-col items-center bg-[#f1f1f1] py-1">
          <svg className="h-1 w-[6px]" viewBox="0 0 6 4" fill="#8f8f8f"><path d="M0 4h6L3 0z" /></svg>
          <span className="mt-1 h-[356px] w-[10px] bg-[#c1c1c1]" />
          <svg className="mt-auto h-1 w-[6px]" viewBox="0 0 6 4" fill="#505050"><path d="M0 0h6L3 4z" /></svg>
        </div>
      </div>
      <div className="flex h-[13px] shrink-0 items-center bg-[#f1f1f1] pr-[17px]">
        <svg className="mx-1 h-[6px] w-1" viewBox="0 0 4 6" fill="#a3a3a3"><path d="M4 0v6L0 3z" /></svg>
        <span className="ml-px h-[10px] flex-1 bg-[#c1c1c1]" />
        <svg className="ml-[6px] h-[6px] w-1" viewBox="0 0 4 6" fill="#505050"><path d="M0 0v6l4-3z" /></svg>
      </div>
      <Taskbar />
    </div>
  );
}
